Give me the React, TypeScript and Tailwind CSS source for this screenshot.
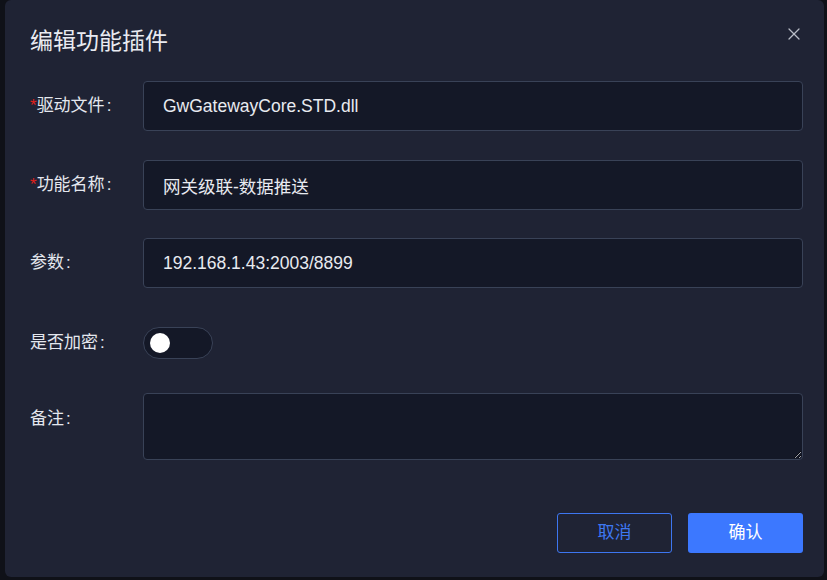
import { X } from "lucide-react";

const font = { fontFamily: '"Liberation Sans", "Noto Sans CJK SC", sans-serif' };

function Label({ text, required }: { text: string; required?: boolean }) {
  return (
    <div className="w-[113px] shrink-0 text-[17px] text-[#e4e7ee]">
      {required && <span className="text-[#e0201c]">*</span>}
      {text}
      <span className="ml-[2px]">:</span>
    </div>
  );
}

function Field({ label, value, required }: { label: string; value: string; required?: boolean }) {
  return (
    <div className="flex items-center">
      <Label text={label} required={required} />
      <input
        readOnly
        value={value}
        className="h-[50px] flex-1 rounded-[4px] border border-[#394257] bg-[#141827] px-[19px] text-[17.5px] text-[#e8eaf0] outline-none"
      />
    </div>
  );
}

export default function App() {
  return (
    <div className="h-[580px] w-[827px] bg-[#0f1118] pr-[3px] pb-[3px] pl-[5px]" style={font}>
      <div className="flex h-full w-full flex-col rounded-md bg-[#1f2334] pl-[25px] pr-[21px]">
        <div className="flex items-center justify-between pt-[26px]">
          <h1 className="text-[23px] leading-[30px] text-[#e9ebf1]">编辑功能插件</h1>
          <X className="-mr-[1px] -mt-[14px] h-[20px] w-[20px] text-[#b9bcc6]" strokeWidth={1.5} />
        </div>

        <div className="mt-[25px] flex flex-col">
          <Field label="驱动文件" value="GwGatewayCore.STD.dll" required />
          <div className="mt-[29px]">
            <Field label="功能名称" value="网关级联-数据推送" required />
          </div>
          <div className="mt-[28px]">
            <Field label="参数" value="192.168.1.43:2003/8899" />
          </div>
        </div>

        <div className="mt-[39px] flex items-center">
          <Label text="是否加密" />
          <div className="flex h-[32px] w-[70px] items-center rounded-full border border-[#394257] bg-[#141827] pl-[6px]">
            <div className="h-[20px] w-[20px] rounded-full bg-white" />
          </div>
        </div>

        <div className="mt-[34px] flex items-start">
          <div className="pt-[13px]">
            <Label text="备注" />
          </div>
          <textarea
            readOnly
            className="h-[67px] flex-1 resize-y rounded-[4px] border border-[#394257] bg-[#141827] px-[19px] py-[10px] text-[16px] text-[#e8eaf0] outline-none"
          />
        </div>

        <div className="mt-[53px] flex justify-end gap-[16px]">
          <button className="h-[40px] w-[115px] rounded-[3px] border border-[#3d76f0] text-[17px] text-[#3e78f2]">
            取消
          </button>
          <button className="h-[40px] w-[115px] rounded-[3px] bg-[#3c78ff] text-[17px] text-white">
            确认
          </button>
        </div>
      </div>
    </div>
  );
}
